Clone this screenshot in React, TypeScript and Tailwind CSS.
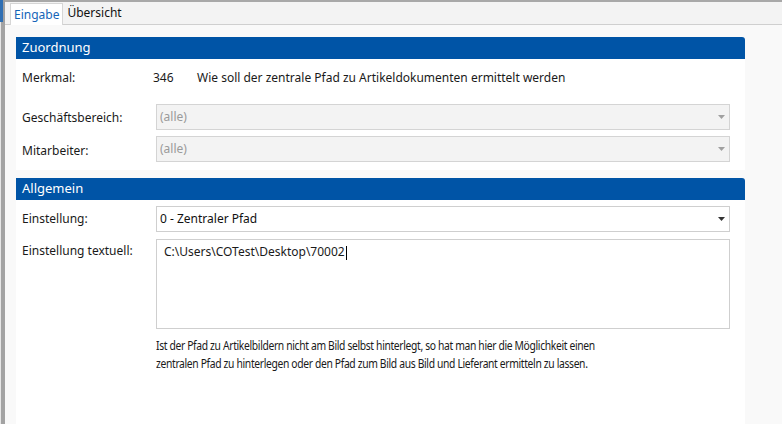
import React from "react";

const font = { fontFamily: '"Noto Sans", "Open Sans", sans-serif' };

function Caret({ color = "#555" }: { color?: string }) {
  return (
    <svg width="7" height="4" viewBox="0 0 7 4" className="shrink-0">
      <path d="M0 0 H7 L3.5 4 Z" fill={color} />
    </svg>
  );
}

function Header({ title }: { title: string }) {
  return (
    <div className="h-[22px] bg-[#0054a6] rounded-tr-[3px] flex items-center pl-[6px] text-white text-[13px]">
      {title}
    </div>
  );
}

function Combo({ value, disabled }: { value: string; disabled?: boolean }) {
  return (
    <div
      className={
        "w-[574px] h-[26px] border flex items-center justify-between pl-[3px] pr-[4px] text-[12px] " +
        (disabled
          ? "bg-[#f3f3f3] border-[#d4d4d4] text-[#9a9a9a]"
          : "bg-white border-[#cfcfcf] text-[#111]")
      }
    >
      <span>{value}</span>
      <Caret color={disabled ? "#a0a0a0" : "#333"} />
    </div>
  );
}

export default function App() {
  return (
    <div
      className="w-[782px] h-[424px] flex overflow-hidden bg-[#f9f9f9] text-[#1a1a1a]"
      style={font}
    >
      <div className="w-[5px] flex flex-col shrink-0">
        <div className="h-[22px] flex">
          <div className="w-[3px] bg-[#2f6fb3]" />
          <div className="w-[2px] bg-[#a0a0a0]" />
        </div>
        <div className="flex-1 flex">
          <div className="w-px bg-[#e6e6e6]" />
          <div className="w-[4px] bg-[#a3a3a3]" />
        </div>
      </div>
      <div className="flex-1 flex flex-col border-t-2 border-[#a8a8a8]">
        <div className="h-[23px] bg-[#f3f3f3] border-b border-[#cfcfcf] flex items-end pl-[5px]">
          <div className="h-[22px] px-[3px] bg-white border-l border-r border-t border-[#d6d6d6] text-[12px] text-[#1565b8] flex items-center -mb-px">
            Eingabe
          </div>
          <div className="h-[22px] px-[4px] text-[12px] text-[#111] flex items-center">
            Übersicht
          </div>
        </div>
        <div className="flex-1 pl-[11px] pt-[12px]">
          <div className="w-[729px]">
            <Header title="Zuordnung" />
            <div className="bg-white pl-[6px] pb-[9px]">
              <div className="h-[36px] flex items-center text-[12px] pt-[2px]">
                <span className="w-[131px]">Merkmal:</span>
                <span className="w-[44px]">346</span>
                <span>Wie soll der zentrale Pfad zu Artikeldokumenten ermittelt werden</span>
              </div>
              <div className="h-[9px]" />
              <div className="flex items-center h-[26px] text-[12px]">
                <span className="w-[134px] pt-[2px]">Geschäftsbereich:</span>
                <Combo value="(alle)" disabled />
              </div>
              <div className="h-[6px]" />
              <div className="flex items-center h-[25px] text-[12px]">
                <span className="w-[134px] pt-[4px]">Mitarbeiter:</span>
                <Combo value="(alle)" disabled />
              </div>
            </div>
            <div className="h-[8px]" />
            <Header title="Allgemein" />
            <div className="bg-white pl-[6px] pt-[6px] h-[260px]">
              <div className="flex items-center h-[26px] text-[12px]">
                <span className="w-[134px]">Einstellung:</span>
                <Combo value="0 - Zentraler Pfad" />
              </div>
              <div className="h-[7px]" />
              <div className="flex text-[12px]">
                <span className="w-[134px] pt-[3px]">Einstellung textuell:</span>
                <div className="w-[574px] h-[90px] border border-[#cfcfcf] pl-[7px] pt-[3px]">
                  <span>C:\Users\COTest\Desktop\70002</span>
                  <span className="inline-block w-px h-[14px] bg-black align-middle ml-px" />
                </div>
              </div>
              <div className="pl-[134px] pt-[8px]">
                <div className="text-[12px] leading-[18px] tracking-[-0.4px] origin-left scale-x-[0.86] whitespace-nowrap">
                  Ist der Pfad zu Artikelbildern nicht am Bild selbst hinterlegt, so hat man hier die Möglichkeit einen
                  <br />
                  zentralen Pfad zu hinterlegen oder den Pfad zum Bild aus Bild und Lieferant ermitteln zu lassen.
                </div>
              </div>
            </div>
          </div>
        </div>
      </div>
    </div>
  );
}
